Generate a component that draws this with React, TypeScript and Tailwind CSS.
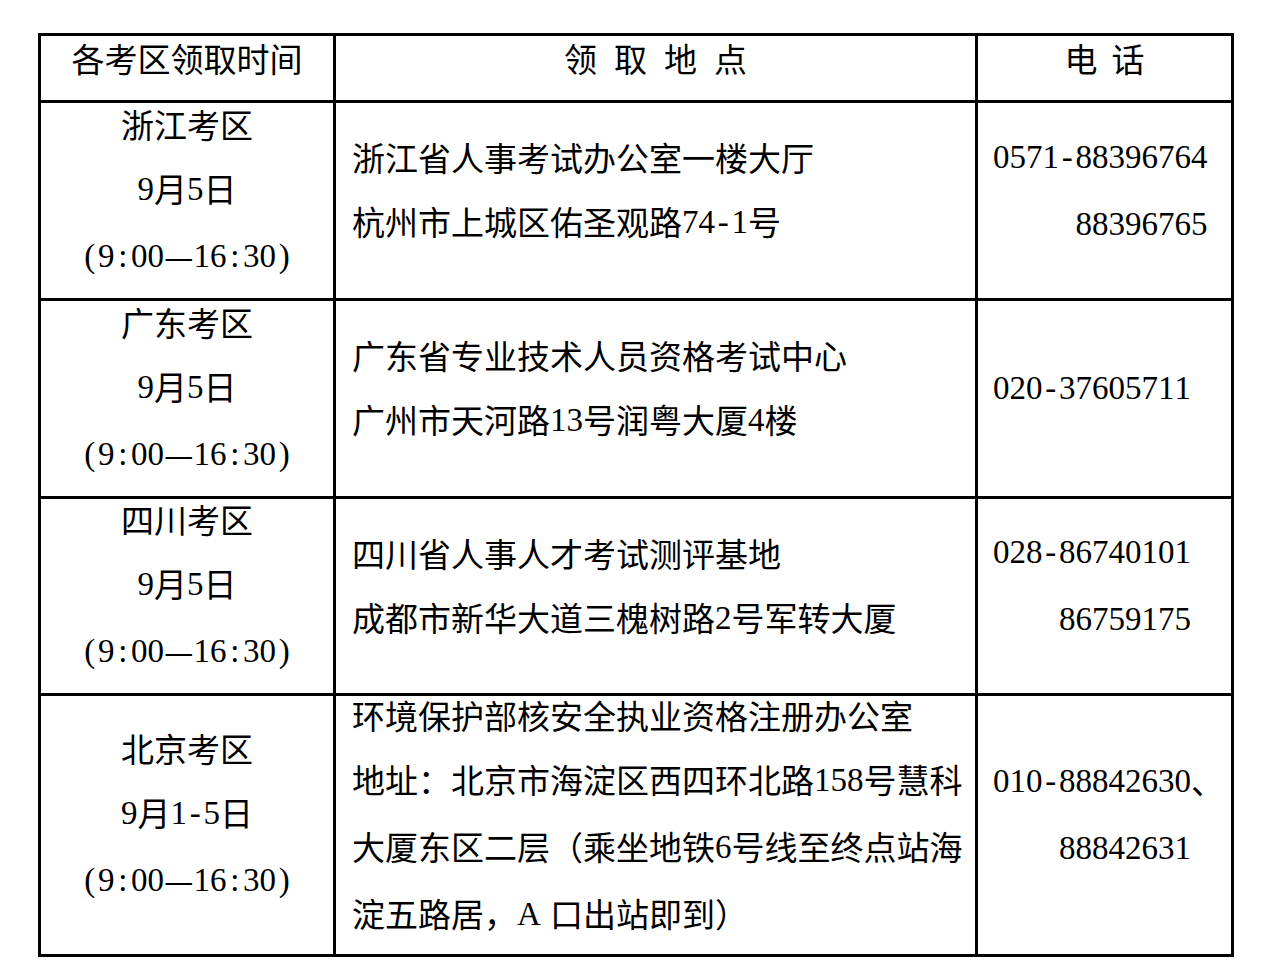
import React from "react";

function Txt({ s }: { s: string }) {
  const parts: React.ReactNode[] = [];
  let run = "";
  let k = 0;
  const flush = () => {
    if (run) {
      parts.push(<span key={k++}>{run}</span>);
      run = "";
    }
  };
  for (const ch of s) {
    if (ch.charCodeAt(0) < 128) {
      flush();
      parts.push(
        <span
          key={k++}
          className="relative -top-[2px] inline-block w-[16.5px] text-center font-['Liberation_Serif',serif]"
        >
          {ch === " " ? "\u00a0" : ch}
        </span>
      );
    } else {
      run += ch;
    }
  }
  flush();
  return <div className="whitespace-nowrap">{parts}</div>;
}

type Row = { left: string[]; mid: string[]; right: string[] };

const rows: Row[] = [
  {
    left: ["浙江考区", "9月5日", "(9:00—16:30)"],
    mid: ["浙江省人事考试办公室一楼大厅", "杭州市上城区佑圣观路74-1号"],
    right: ["0571-88396764", "     88396765"],
  },
  {
    left: ["广东考区", "9月5日", "(9:00—16:30)"],
    mid: ["广东省专业技术人员资格考试中心", "广州市天河路13号润粤大厦4楼"],
    right: ["020-37605711"],
  },
  {
    left: ["四川考区", "9月5日", "(9:00—16:30)"],
    mid: ["四川省人事人才考试测评基地", "成都市新华大道三槐树路2号军转大厦"],
    right: ["028-86740101", "    86759175"],
  },
  {
    left: ["北京考区", "9月1-5日", "(9:00—16:30)"],
    mid: [
      "环境保护部核安全执业资格注册办公室",
      "地址：北京市海淀区西四环北路158号慧科",
      "大厦东区二层（乘坐地铁6号线至终点站海",
      "淀五路居，A 口出站即到）",
    ],
    right: ["010-88842630、", "    88842631"],
  },
];

export default function App() {
  return (
    <div className="w-[1266px] h-[978px] bg-white overflow-hidden pt-[33px] pl-[38px] text-black text-[33px] leading-[64px] font-['Noto_Sans_CJK_SC','Noto_Sans_CJK_JP',sans-serif]">
      <div className="w-[1196px] border-[3px] border-black grid grid-cols-[295px_642px_253px] grid-rows-[67px_198px_198px_197px_258px]">
        {/* header */}
        <div className="border-r-[3px] border-b-[3px] border-black flex flex-col items-center justify-center pb-[20px]">
          <Txt s="各考区领取时间" />
        </div>
        <div className="border-r-[3px] border-b-[3px] border-black flex items-center justify-center gap-[17px] pb-[20px]">
          <span>领</span>
          <span>取</span>
          <span>地</span>
          <span>点</span>
        </div>
        <div className="border-b-[3px] border-black flex items-center justify-center gap-[14px] pb-[20px]">
          <span>电</span>
          <span>话</span>
        </div>

        {rows.map((r, i) => {
          const last = i === rows.length - 1;
          return (
            <React.Fragment key={i}>
              <div
                className={
                  last
                    ? "border-r-[3px] border-black flex flex-col items-center justify-center pb-[20px]"
                    : "border-r-[3px] border-b-[3px] border-black flex flex-col items-center justify-center pb-[20px]"
                }
              >
                {r.left.map((l, j) => (
                  <Txt key={j} s={l} />
                ))}
              </div>
              <div
                className={
                  last
                    ? "border-r-[3px] border-black flex flex-col items-start justify-center pl-[16px] pb-[20px]"
                    : "border-r-[3px] border-b-[3px] border-black flex flex-col items-start justify-center pl-[16px] pb-[20px]"
                }
              >
                {r.mid.map((l, j) => (
                  <Txt key={j} s={l} />
                ))}
              </div>
              <div
                className={
                  last
                    ? "flex flex-col items-start justify-center pl-[15px] pb-[20px]"
                    : "border-b-[3px] border-black flex flex-col items-start justify-center pl-[15px] pb-[20px]"
                }
              >
                {r.right.map((l, j) => (
                  <Txt key={j} s={l} />
                ))}
              </div>
            </React.Fragment>
          );
        })}
      </div>
    </div>
  );
}
